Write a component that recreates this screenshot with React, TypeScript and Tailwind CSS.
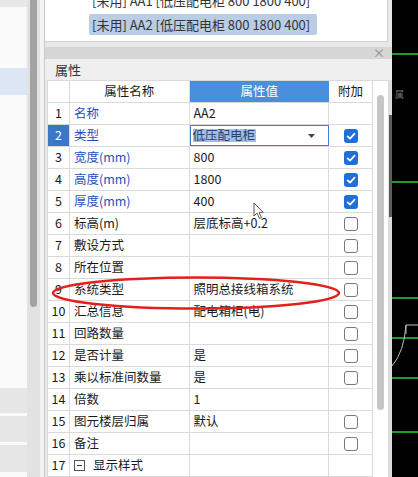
import React from 'react';

type Row = {
  no: number;
  name: string;
  value?: string;
  blue?: boolean;
  check?: 'on' | 'off';
  editor?: boolean;
  group?: boolean;
};

const rows: Row[] = [
  { no: 1, name: '名称', value: 'AA2', blue: true },
  { no: 2, name: '类型', value: '低压配电柜', blue: true, check: 'on', editor: true },
  { no: 3, name: '宽度(mm)', value: '800', blue: true, check: 'on' },
  { no: 4, name: '高度(mm)', value: '1800', blue: true, check: 'on' },
  { no: 5, name: '厚度(mm)', value: '400', blue: true, check: 'on' },
  { no: 6, name: '标高(m)', value: '层底标高+0.2', check: 'off' },
  { no: 7, name: '敷设方式', check: 'off' },
  { no: 8, name: '所在位置', check: 'off' },
  { no: 9, name: '系统类型', value: '照明总接线箱系统', check: 'off' },
  { no: 10, name: '汇总信息', value: '配电箱柜(电)', check: 'off' },
  { no: 11, name: '回路数量', check: 'off' },
  { no: 12, name: '是否计量', value: '是', check: 'off' },
  { no: 13, name: '乘以标准间数量', value: '是', check: 'off' },
  { no: 14, name: '倍数', value: '1' },
  { no: 15, name: '图元楼层归属', value: '默认', check: 'off' },
  { no: 16, name: '备注', check: 'off' },
  { no: 17, name: '显示样式', group: true },
];

function CheckBox({ on }: { on: boolean }) {
  if (on) {
    return (
      <div className="flex h-[14px] w-[14px] items-center justify-center rounded-[3px] bg-[#1f6fd8]">
        <svg width="14" height="14" viewBox="0 0 14 14">
          <path d="M3.6 7.3 L6 9.6 L10.6 4.6" fill="none" stroke="#fff" strokeWidth="1.7" strokeLinecap="round" strokeLinejoin="round" />
        </svg>
      </div>
    );
  }
  return <div className="h-[14px] w-[14px] rounded-[3px] border-[1.5px] border-[#7a7a7a] bg-white" />;
}

function PropRow({ row }: { row: Row }) {
  const active = row.no === 2;
  return (
    <div className="flex h-[22px] border-b border-[#dadada]">
      <div
        className={
          active
            ? 'flex w-[22px] items-center justify-center border-r border-[#dadada] bg-[#3b77c4] text-white'
            : 'flex w-[22px] items-center justify-center border-r border-[#dadada] bg-white'
        }
      >
        {row.no}
      </div>
      <div
        className={
          row.blue
            ? 'flex w-[120px] items-center gap-[8px] border-r border-[#dadada] bg-white pl-[4px] text-[#1f4fbf]'
            : 'flex w-[120px] items-center gap-[8px] border-r border-[#dadada] bg-white pl-[4px]'
        }
      >
        {row.group && (
          <div className="flex h-[11px] w-[11px] items-center justify-center border border-[#555] bg-white">
            <div className="h-px w-[5px] bg-[#333]" />
          </div>
        )}
        <span>{row.name}</span>
      </div>
      {row.editor ? (
        <div className="flex w-[140px] items-center justify-between border-[1.5px] border-[#3d7fd6] bg-white pl-[2px] pr-[13px]">
          <span className="bg-[#a4bde0] pr-px text-[#27426f]">{row.value}</span>
          <svg width="7" height="4" viewBox="0 0 7 4">
            <path d="M0 0 L7 0 L3.5 4 Z" fill="#444" />
          </svg>
        </div>
      ) : (
        <div className="flex w-[140px] items-center border-r border-[#dadada] bg-white pl-[4px]">{row.value}</div>
      )}
      <div className="flex w-[43px] items-center justify-center bg-white">
        {row.check && <CheckBox on={row.check === 'on'} />}
      </div>
    </div>
  );
}

export default function App() {
  return (
    <div className="relative flex h-[477px] w-[418px] overflow-hidden bg-black font-[Noto_Sans_CJK_SC,sans-serif] text-[12.5px] leading-none text-[#1a1a1a]">
      {/* left list strip */}
      <div className="flex w-[45px] shrink-0">
        <div className="flex w-[27px] flex-col bg-[#fafafa]">
          <div className="h-[7px] bg-[#e8e8e8]" />
          <div className="mt-[61px] h-[27px] bg-[#dce6f4]" />
          <div className="mt-[293px] h-[25px] bg-[#e6e6e6]" />
          <div className="mt-[3px] h-[26px] bg-[#e6e6e6]" />
          <div className="mt-[3px] h-[27px] bg-[#e6e6e6]" />
        </div>
        <div className="w-[13px] bg-[#e2e2e2] pl-[3px]">
          <div className="h-[307px] w-[7px] rounded-b-full bg-[#a3a3a3]" />
        </div>
        <div className="w-[5px] border-r border-[#c9c9c9] bg-[#f3f3f3]" />
      </div>

      {/* property panel */}
      <div className="flex w-[347px] shrink-0 flex-col bg-[#e8e8e8]">
        <div className="mr-[4px] flex h-[45px] flex-col overflow-hidden border-b border-r border-[#d2d2d2] bg-white pl-[44px] text-[13px] text-[#333]">
          <div className="mt-[-10px] flex h-[21px] shrink-0 items-center px-[3px]">[未用] AA1 [低压配电柜 800 1800 400]</div>
          <div className="mt-[3px] flex h-[21px] w-[228px] shrink-0 items-center rounded-[2px] bg-[#b9cde6] px-[3px]">
            [未用] AA2 [低压配电柜 800 1800 400]
          </div>
        </div>
        <div className="h-[5px]" />
        <div className="flex h-[12px] items-center justify-end bg-[#d6d6d6] pr-[7px] text-[12px] text-[#8a8a8a]">×</div>
        <div className="flex h-[23px] items-center bg-[#efefef] pl-[10px] text-[13px] text-[#333]">属性</div>
        <div className="flex flex-1">
          <div className="ml-[2px] flex w-[325px] flex-col border-l border-t border-[#dadada] bg-white">
            <div className="flex h-[22px] border-b border-[#dadada]">
              <div className="w-[22px] border-r border-[#dadada]" />
              <div className="flex w-[120px] items-center justify-center border-r border-[#dadada]">属性名称</div>
              <div className="flex w-[140px] items-center justify-center bg-[#4a8fdb] text-white">属性值</div>
              <div className="flex w-[43px] items-center justify-center">附加</div>
            </div>
            {rows.map((r) => (
              <PropRow key={r.no} row={r} />
            ))}
          </div>
          <div className="w-[16px] border-l border-t border-[#dadada] bg-white pl-[4px] pt-[14px]">
            <div className="h-[315px] w-[7px] rounded-full bg-[#c6c6c6]" />
          </div>
          <div className="flex w-[4px] flex-col items-end bg-[#dcdcdc] pt-[35px]">
            <div className="h-[102px] w-[3px] bg-[#5c5c5c]" />
          </div>
        </div>
      </div>

      {/* drawing canvas */}
      <div className="relative flex-1 bg-black">
        <div className="absolute left-0 right-0 top-[53px] h-[2px] bg-[#1f9a2a]" />
        <div className="absolute left-0 right-0 top-[181px] h-[2px] bg-[#1f9a2a]" />
        <div className="absolute left-0 right-0 top-[297px] h-[2px] bg-[#1f9a2a]" />
        <div className="absolute left-0 right-0 top-[337px] h-[2px] bg-[#1f9a2a]" />
        <div className="absolute left-0 right-0 top-[377px] h-[2px] bg-[#1f9a2a]" />
        <div className="absolute left-0 right-0 top-[431px] h-[2px] bg-[#1f9a2a]" />
        <div className="absolute left-[3px] top-[90px] text-[9px] text-[#777]">属</div>
        <svg className="absolute left-0 top-[320px]" width="26" height="50" viewBox="0 0 26 50">
          <path d="M0 46 Q12 32 14 5 L26 5 M14 5 L14 14" fill="none" stroke="#bbb" strokeWidth="1" />
        </svg>
      </div>

      {/* annotation ellipse */}
      <svg className="pointer-events-none absolute left-[50px] top-[275px]" width="292" height="36" viewBox="0 0 292 36">
        <ellipse cx="146" cy="18" rx="143" ry="15.5" fill="none" stroke="#e3201b" strokeWidth="2.6" />
      </svg>

      {/* mouse cursor */}
      <svg className="pointer-events-none absolute left-[253px] top-[202px]" width="12" height="18" viewBox="0 0 12 18">
        <path d="M1 1 L1 14 L4 11 L6.5 16.5 L8.5 15.6 L6 10.4 L10.2 10.4 Z" fill="#fff" stroke="#555" strokeWidth="1" strokeLinejoin="round" />
      </svg>
    </div>
  );
}
